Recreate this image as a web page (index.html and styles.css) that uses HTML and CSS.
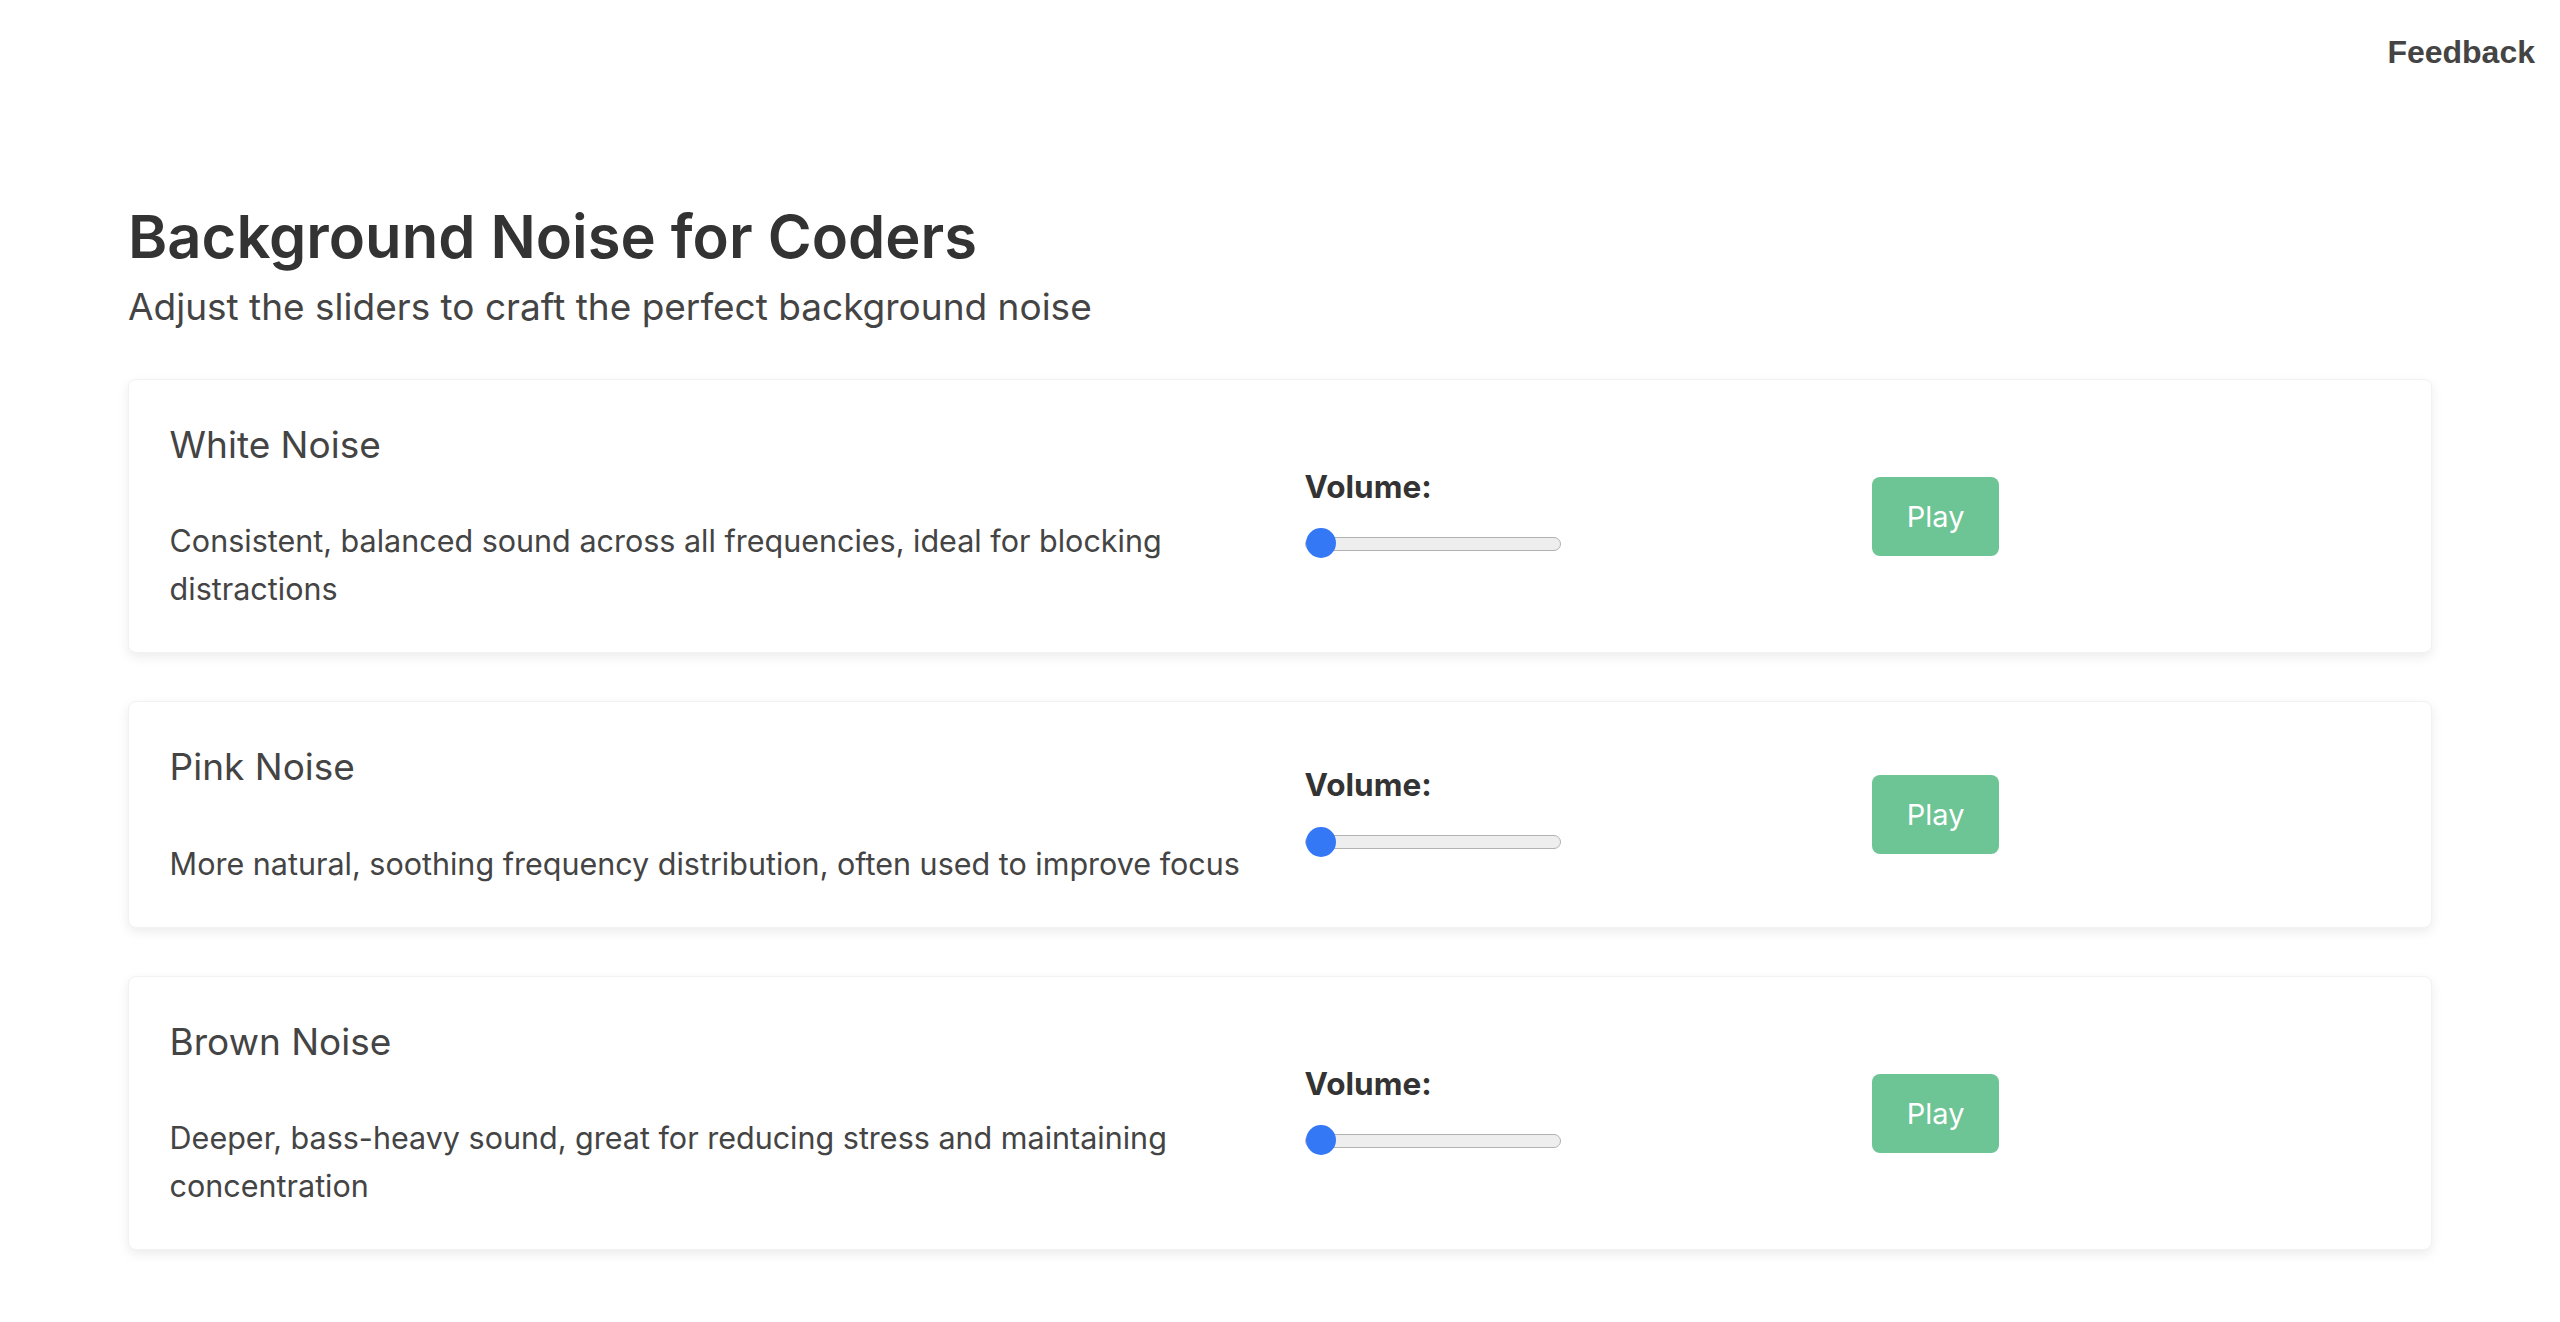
FILE: index.html
```html
<!DOCTYPE html>
<html lang="en">
<head>
<meta charset="utf-8">
<title>Background Noise for Coders</title>
<link rel="stylesheet" href="styles.css">
</head>
<body>
<header class="topbar">
  <a class="feedback" href="#">Feedback</a>
</header>
<main class="container">
  <section class="intro">
    <h1 class="title">Background Noise for Coders</h1>
    <p class="subtitle">Adjust the sliders to craft the perfect background noise</p>
  </section>

  <div class="card">
    <div class="col col-info">
      <h3 class="noise-name">White Noise</h3>
      <p class="noise-desc">Consistent, balanced sound across all frequencies, ideal for blocking distractions</p>
    </div>
    <div class="col col-volume">
      <label class="vol-label">Volume:</label>
      <input class="vol-slider" type="range" min="0" max="100" value="0">
    </div>
    <div class="col col-action">
      <button class="play-btn">Play</button>
    </div>
  </div>

  <div class="card">
    <div class="col col-info">
      <h3 class="noise-name">Pink Noise</h3>
      <p class="noise-desc">More natural, soothing frequency distribution, often used to improve focus</p>
    </div>
    <div class="col col-volume">
      <label class="vol-label">Volume:</label>
      <input class="vol-slider" type="range" min="0" max="100" value="0">
    </div>
    <div class="col col-action">
      <button class="play-btn">Play</button>
    </div>
  </div>

  <div class="card">
    <div class="col col-info">
      <h3 class="noise-name">Brown Noise</h3>
      <p class="noise-desc">Deeper, bass-heavy sound, great for reducing stress and maintaining concentration</p>
    </div>
    <div class="col col-volume">
      <label class="vol-label">Volume:</label>
      <input class="vol-slider" type="range" min="0" max="100" value="0">
    </div>
    <div class="col col-action">
      <button class="play-btn">Play</button>
    </div>
  </div>
</main>
</body>
</html>
```
FILE: styles.css
```css
* { box-sizing: border-box; }

html, body {
  margin: 0;
  padding: 0;
  background: #ffffff;
}

body {
  font-family: Inter, "Noto Sans", sans-serif;
  font-size: 25.6px;
  color: #444444;
}

.topbar {
  height: 104px;
  display: flex;
  align-items: center;
  justify-content: flex-end;
  padding-right: 25px;
}

.feedback {
  font-family: "Liberation Sans", Arial, sans-serif;
  font-weight: bold;
  font-size: 32px;
  color: #444444;
  text-decoration: none;
}

.container {
  width: 90%;
  margin: 0 auto;
}

.intro {
  padding-top: 97px;
  padding-bottom: 50px;
}

.title {
  margin: 0;
  font-size: 59.7px;
  font-weight: 600;
  line-height: 1.2;
  color: #333333;
}

.subtitle {
  margin: 12px 0 0;
  font-size: 37px;
  line-height: 1.2;
  color: #444444;
}

.card {
  display: grid;
  grid-template-columns: 2fr 1fr 1fr;
  align-items: center;
  padding: 16px;
  margin-bottom: 48px;
  background: #ffffff;
  border: 1px solid #f2f2f2;
  border-radius: 8px;
  box-shadow: 0 4px 12px rgba(0, 0, 0, 0.08);
}

.col {
  padding: 0 24.6px;
  min-width: 0;
}

.col-volume {
  padding-bottom: 6px;
}

.noise-name {
  margin: 27px 0 50px;
  font-size: 37px;
  font-weight: 400;
  line-height: 1.2;
  color: #444444;
}

.noise-desc {
  margin: 0 0 23px;
  font-size: 30.5px;
  line-height: 48px;
  color: #444444;
}

.vol-label {
  display: block;
  font-size: 31.5px;
  font-weight: 700;
  line-height: 38px;
  color: #333333;
  margin-bottom: 23px;
}

.vol-slider {
  -webkit-appearance: none;
  appearance: none;
  display: block;
  width: 256px;
  height: 30px;
  margin: 0;
  background: transparent;
}

.vol-slider::-webkit-slider-runnable-track {
  height: 14px;
  background: #eeeeee;
  border: 1.5px solid #b2b2b2;
  border-radius: 7px;
}

.vol-slider::-webkit-slider-thumb {
  -webkit-appearance: none;
  appearance: none;
  width: 30px;
  height: 30px;
  margin-top: -9.5px;
  border-radius: 50%;
  background: #3478f6;
  border: none;
}

.play-btn {
  display: block;
  font-family: Inter, "Noto Sans", sans-serif;
  font-size: 29px;
  color: #ffffff;
  background: #6dc494;
  border: none;
  border-radius: 8px;
  width: 127px;
  height: 79px;
  padding: 0;
  cursor: pointer;
}
```
